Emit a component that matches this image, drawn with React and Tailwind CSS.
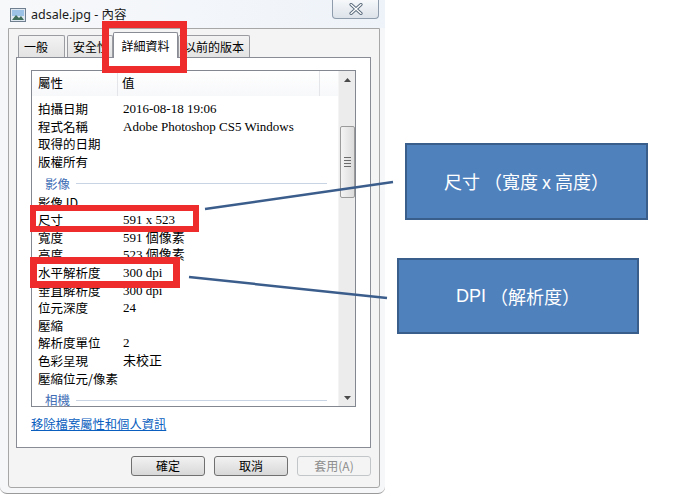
import React from 'react';

const cjk = { fontFamily: '"Noto Sans CJK TC", "Noto Sans", sans-serif' };
const mixed = { fontFamily: '"Liberation Serif", "Noto Sans CJK TC", serif' };

const groups = [
  {
    rows: [
      ['拍攝日期', '2016-08-18 19:06'],
      ['程式名稱', 'Adobe Photoshop CS5 Windows'],
      ['取得的日期', ''],
      ['版權所有', ''],
    ],
  },
  {
    title: '影像',
    rows: [
      ['影像 ID', ''],
      ['尺寸', '591 x 523'],
      ['寬度', '591 個像素'],
      ['高度', '523 個像素'],
      ['水平解析度', '300 dpi'],
      ['垂直解析度', '300 dpi'],
      ['位元深度', '24'],
      ['壓縮', ''],
      ['解析度單位', '2'],
      ['色彩呈現', '未校正'],
      ['壓縮位元/像素', ''],
    ],
  },
  { title: '相機', rows: [] },
];

const FileIcon = () => (
  <svg width="16" height="14" viewBox="0 0 16 14">
    <rect x="0.5" y="0.5" width="15" height="13" fill="#dfe8f0" stroke="#6f7f8f" />
    <rect x="2" y="2" width="12" height="6" fill="#9cc3e6" />
    <path d="M2 12 L6 7 L9 10 L11 8 L14 12 Z" fill="#3f6f5a" />
  </svg>
);

const CloseGlyph = () => (
  <svg width="14" height="12" viewBox="0 0 14 12">
    <path d="M2 1.5 L12 10.5 M12 1.5 L2 10.5" stroke="#5b6b7c" strokeWidth="3.2" strokeLinecap="round" />
    <path d="M2 1.5 L12 10.5 M12 1.5 L2 10.5" stroke="#ffffff" strokeWidth="1.3" strokeLinecap="round" />
  </svg>
);

const Tab = ({ label, w, active }) =>
  active ? (
    <div className={`${w} h-[26px] -mb-px bg-white border border-b-0 border-[#898c95] rounded-t-[2px] flex items-center justify-center text-[12px] text-black relative z-10`}>
      {label}
    </div>
  ) : (
    <div className={`${w} h-[22px] bg-gradient-to-b from-[#f3f3f3] to-[#e3e3e3] border border-b-0 border-[#9a9ca2] rounded-t-[2px] flex items-center pl-[5px] text-[12px] text-black overflow-hidden whitespace-nowrap`}>
      {label}
    </div>
  );

const Button = ({ children, disabled }) => (
  <div
    className={`w-[74px] h-[20px] rounded-[3px] border flex items-center justify-center text-[12px] ${
      disabled
        ? 'border-[#c3c6c9] bg-[#f4f4f4] text-[#8d8d8d]'
        : 'border-[#707070] bg-gradient-to-b from-[#f2f2f2] to-[#d8d8d8] text-black'
    }`}
  >
    {children}
  </div>
);

export default function App() {
  return (
    <div className="relative w-[687px] h-[499px] bg-white overflow-hidden" style={cjk}>
      {/* dialog window */}
      <div className="w-[385px] h-[494px] bg-[#f6f7f9] rounded-b-[7px] border-b border-[#9a9a9a] flex flex-col">
        {/* title bar */}
        <div className="h-[28px] flex items-start relative bg-gradient-to-r from-[#f7f8fa] via-[#f3f6fa] to-[#eef3f9]">
          <div className="flex items-center gap-[5px] pl-[10px] pt-[6px]">
            <FileIcon />
            <span className="text-[12.5px] text-[#1a1a1a]" style={{ fontFamily: '"Noto Sans", "Noto Sans CJK TC", sans-serif' }}>
              adsale.jpg - 內容
            </span>
          </div>
          <div className="ml-auto mr-[6px] w-[47px] h-[19px] rounded-b-[4px] border border-t-0 border-[#8f9cab] bg-gradient-to-b from-[#f6f8fa] to-[#dde3ea] flex items-center justify-center">
            <CloseGlyph />
          </div>
        </div>

        {/* window body */}
        <div className="ml-[8px] w-[372px] h-[460px] border border-[#a7a7a7] rounded-b-[3px] bg-[#f4f4f4] flex flex-col">
          {/* tabs */}
          <div className="mt-[3px] h-[25px] ml-[8px] flex items-end">
            <div className="ml-[1px] flex items-end gap-[2px]">
              <Tab label="一般" w="w-[47px]" />
              <Tab label="安全性" w="w-[46px]" />
            </div>
            <Tab label="詳細資料" w="w-[65px]" active />
            <Tab label="以前的版本" w="w-[72px]" />
          </div>

          {/* tab panel */}
          <div className="ml-[7px] w-[355px] h-[391px] border border-[#898c95] bg-white flex flex-col">
            {/* list */}
            <div className="ml-[14px] mt-[12px] w-[325px] h-[337px] border border-[#828790] flex overflow-hidden">
              <div className="w-[306px] flex flex-col overflow-hidden">
                <div className="h-[25px] shrink-0 flex items-center bg-gradient-to-b from-white to-[#f7f8fa] text-[12.5px] text-black">
                  <div className="w-[86px] pl-[6px] border-r border-[#e3e5e9] h-full flex items-center">屬性</div>
                  <div className="w-[202px] pl-[4px] border-r border-[#e3e5e9] h-full flex items-center">值</div>
                </div>
                <div className="pt-[4px] flex flex-col text-[12.5px] text-black">
                  {groups.map((g, gi) => (
                    <div key={gi} className="flex flex-col">
                      {g.title && (
                        <div className="h-[23px] shrink-0 pt-[4px] flex items-center pl-[13px] pr-[11px] gap-[6px]">
                          <span className="text-[#3d6db5] leading-[18px]">{g.title}</span>
                          <div className="flex-1 h-px bg-[#c8d3e3]" />
                        </div>
                      )}
                      {g.rows.map(([k, v]) => (
                        <div key={k} className="h-[17.6px] shrink-0 flex items-center leading-[17px] whitespace-nowrap">
                          <div className="w-[91px] pl-[6px]">{k}</div>
                          <div style={mixed} className="text-[13px]">{v}</div>
                        </div>
                      ))}
                    </div>
                  ))}
                </div>
              </div>
              {/* scrollbar */}
              <div className="w-[17px] bg-[#ececec] border-l border-[#f4f4f4] flex flex-col items-center">
                <div className="h-[17px] w-full flex items-center justify-center">
                  <svg width="7" height="4" viewBox="0 0 7 4"><path d="M0 4 L3.5 0 L7 4 Z" fill="#4a4a4a" /></svg>
                </div>
                <div className="mt-[38px] w-[15px] h-[72px] rounded-[2px] border border-[#9b9b9b] bg-gradient-to-r from-[#f4f4f4] to-[#dcdcdc] flex flex-col items-center justify-center gap-[2px]">
                  <div className="w-[7px] h-px bg-[#6c6c6c]" />
                  <div className="w-[7px] h-px bg-[#6c6c6c]" />
                  <div className="w-[7px] h-px bg-[#6c6c6c]" />
                  <div className="w-[7px] h-px bg-[#6c6c6c]" />
                </div>
                <div className="mt-auto h-[17px] w-full flex items-center justify-center">
                  <svg width="7" height="4" viewBox="0 0 7 4"><path d="M0 0 L3.5 4 L7 0 Z" fill="#4a4a4a" /></svg>
                </div>
              </div>
            </div>

            {/* link */}
            <div className="ml-[14px] mt-[9px] leading-[16px] text-[12.3px] text-[#0b5fbf] underline">
              移除檔案屬性和個人資訊
            </div>
          </div>

          {/* buttons */}
          <div className="mt-[8px] pr-[8px] flex justify-end gap-[9px]">
            <Button>確定</Button>
            <Button>取消</Button>
            <Button disabled>套用(A)</Button>
          </div>
        </div>
      </div>

      {/* red highlight frames */}
      <div className="absolute left-[102px] top-[21px] w-[85px] h-[52px] border-[7px] border-[#ee2c2c]" />
      <div className="absolute left-[30px] top-[205px] w-[169px] h-[27px] border-[6px] border-[#ee2c2c]" />
      <div className="absolute left-[30px] top-[257px] w-[150px] h-[31px] border-[7px] border-[#ee2c2c]" />

      {/* connector lines */}
      <svg className="absolute inset-0 pointer-events-none" width="687" height="499">
        <line x1="205" y1="209" x2="393" y2="182" stroke="#3b5d8c" strokeWidth="2.5" />
        <line x1="189" y1="277" x2="387" y2="298" stroke="#3b5d8c" strokeWidth="2.5" />
      </svg>

      {/* callouts */}
      <div className="absolute left-[405px] top-[143px] w-[243px] h-[77px] bg-[#4f81bd] border-2 border-[#395e8c] flex items-center justify-center text-white text-[18px] whitespace-pre">
        尺寸 （寬度 x 高度）
      </div>
      <div className="absolute left-[397px] top-[258px] w-[242px] h-[76px] bg-[#4f81bd] border-2 border-[#395e8c] flex items-center justify-center text-white text-[18px] whitespace-pre">
        <span style={{ fontFamily: '"Liberation Sans", sans-serif' }}>DPI</span> （解析度）
      </div>
    </div>
  );
}
